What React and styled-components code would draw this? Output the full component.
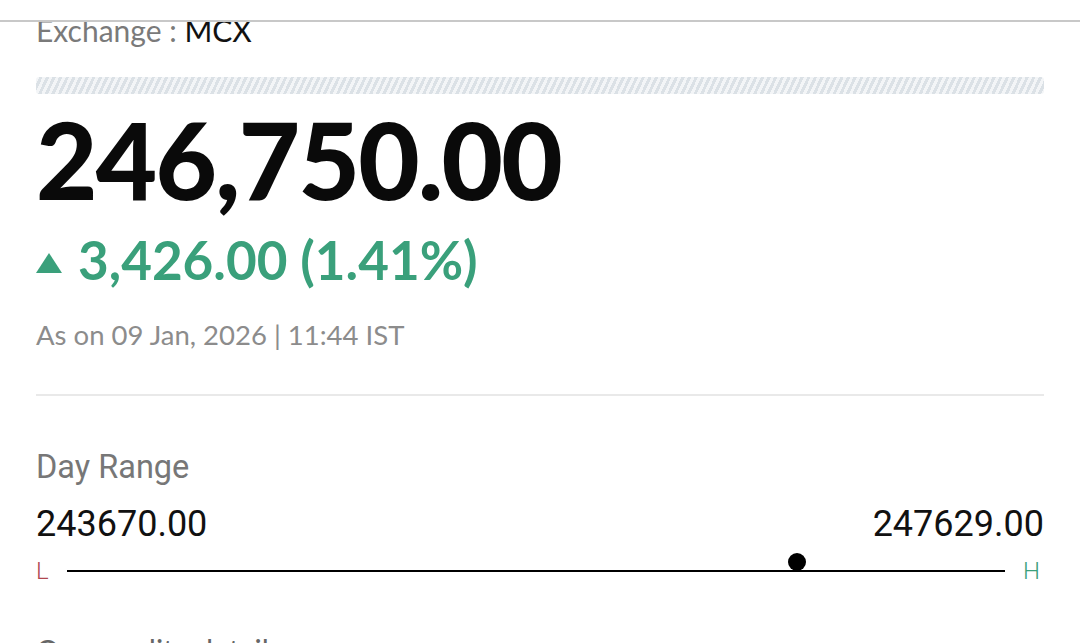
import React from "react";
import styled, { createGlobalStyle } from "styled-components";

const Global = createGlobalStyle`
  html, body { margin: 0; padding: 0; background: #ffffff; }
  body { font-family: Lato, "Noto Sans", sans-serif; width: 1080px; height: 643px; overflow: hidden; }
  #root { height: 643px; }
`;

const Screen = styled.div`
  display: flex;
  flex-direction: column;
  height: 643px;
  overflow: hidden;
  background: #fff;
`;

const TopBar = styled.div`
  flex: none;
  height: 20px;
  background: #fff;
  border-bottom: 2px solid #c8c8c8;
  position: relative;
  z-index: 2;
`;

const Viewport = styled.div`
  flex: 1;
  overflow: hidden;
`;

const Content = styled.div`
  display: flex;
  flex-direction: column;
  padding: 0 36px;
  margin-top: -9px;
`;

const Exchange = styled.div`
  font-family: Lato, sans-serif;
  font-size: 30px;
  line-height: 34px;
  color: #7a7a7a;
  & > b { font-weight: 400; color: #111; }
`;

const Skeleton = styled.div`
  margin-top: 30px;
  height: 17px;
  border-radius: 3px;
  background: repeating-linear-gradient(
    115deg,
    #f3f5f7 0px,
    #f3f5f7 3px,
    #dbe1e6 3px,
    #dbe1e6 6px
  );
`;

const Price = styled.div`
  margin-top: 10px;
  font-family: Lato, sans-serif;
  font-weight: 900;
  font-size: 106px;
  line-height: 110px;
  color: #0a0a0a;
  letter-spacing: -1.7px;
`;

const Change = styled.div`
  margin-top: 19px;
  display: flex;
  align-items: center;
  gap: 16px;
  font-family: Lato, sans-serif;
  font-weight: 700;
  font-size: 53px;
  line-height: 53px;
  color: ${(p) => p.$color};
`;

const Triangle = styled.span`
  flex: none;
  width: 0;
  height: 0;
  border-left: 13px solid transparent;
  border-right: 13px solid transparent;
  border-bottom: 20px solid ${(p) => p.$color};
  margin-top: 6px;
`;

const Timestamp = styled.div`
  margin-top: 32px;
  font-family: Lato, sans-serif;
  font-size: 27.5px;
  line-height: 34px;
  color: #8c8c8c;
`;

const Divider = styled.hr`
  margin: 42px 0 0;
  border: none;
  height: 2px;
  background: #e9e9e9;
`;

const SectionLabel = styled.div`
  margin-top: 52px;
  font-family: Roboto, sans-serif;
  font-size: 32.5px;
  line-height: 38px;
  color: #777;
`;

const RangeValues = styled.div`
  margin-top: 17px;
  display: flex;
  justify-content: space-between;
  font-family: Roboto, sans-serif;
  font-size: 36px;
  line-height: 42px;
  color: #111;
`;

const RangeRow = styled.div`
  margin-top: 8px;
  display: flex;
  align-items: center;
  gap: 18px;
  height: 36px;
  padding-right: 4px;
`;

const EndLabel = styled.span`
  font-family: Roboto, sans-serif;
  font-weight: 300;
  font-size: 24px;
  line-height: 24px;
  color: ${(p) => p.$color};
`;

const Track = styled.div`
  flex: 1;
  position: relative;
  height: 2px;
  background: #000;
`;

const Marker = styled.span`
  position: absolute;
  bottom: 1px;
  width: 18px;
  height: 18px;
  border-radius: 50%;
  background: #000;
  transform: translateX(-50%);
`;

const NextHeading = styled.div`
  margin-top: 43px;
  font-family: Lato, sans-serif;
  font-weight: 400;
  font-size: 30px;
  line-height: 36px;
  color: #666;
`;

const GREEN = "#3aa07b";
const RED = "#b0474f";

export default function App() {
  const low = 243670;
  const high = 247629;
  const ltp = 246750;
  const pct = ((ltp - low) / (high - low)) * 100;

  return (
    <>
      <Global />
      <Screen>
        <TopBar />
        <Viewport>
          <Content>
            <Exchange>
              Exchange : <b>MCX</b>
            </Exchange>
            <Skeleton />
            <Price>246,750.00</Price>
            <Change $color={GREEN}>
              <Triangle $color={GREEN} />
              <span>3,426.00 (1.41%)</span>
            </Change>
            <Timestamp>As on 09 Jan, 2026 | 11:44 IST</Timestamp>
            <Divider />
            <SectionLabel>Day Range</SectionLabel>
            <RangeValues>
              <span>243670.00</span>
              <span>247629.00</span>
            </RangeValues>
            <RangeRow>
              <EndLabel $color={RED}>L</EndLabel>
              <Track>
                <Marker style={{ left: `${pct}%` }} />
              </Track>
              <EndLabel $color={GREEN}>H</EndLabel>
            </RangeRow>
            <NextHeading>Commodity details</NextHeading>
          </Content>
        </Viewport>
      </Screen>
    </>
  );
}
